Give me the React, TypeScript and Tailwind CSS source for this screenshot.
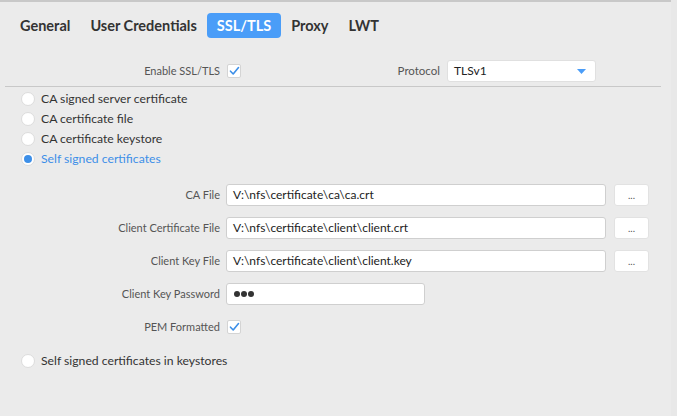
const tabs = ['General', 'User Credentials', 'SSL/TLS', 'Proxy', 'LWT'];

function Check() {
  return (
    <span className="w-[14px] h-[14px] bg-white rounded-[2px] border border-[#d4d4d4] flex items-center justify-center">
      <svg width="11" height="10" viewBox="0 0 11 10" fill="none">
        <path d="M1.5 5.2L4.2 8L9.5 1.5" stroke="#3d8fe8" strokeWidth="1.6" strokeLinecap="round" strokeLinejoin="round" />
      </svg>
    </span>
  );
}

function Radio({ label, checked }: { label: string; checked?: boolean }) {
  return (
    <div className="flex items-center h-[20px]">
      <span className="w-[14px] h-[14px] rounded-full bg-white border border-[#dcdcdc] flex items-center justify-center ml-[21px]">
        {checked && <span className="w-[8px] h-[8px] rounded-full bg-[#3d8fe8]" />}
      </span>
      <span className={`ml-[6px] text-[12.2px] ${checked ? 'text-[#3d8fe8]' : 'text-[#333]'}`}>{label}</span>
    </div>
  );
}

function FileRow({ label, value }: { label: string; value: string }) {
  return (
    <div className="flex items-center h-[22px]">
      <span className="w-[220px] text-right text-[11px] text-[#555]">{label}</span>
      <div className="ml-[6px] w-[380px] h-[22px] bg-white border border-[#cfcfcf] rounded-[3px] flex items-center px-[6px] text-[12px] text-[#222]">
        {value}
      </div>
      <button className="ml-[8px] w-[35px] h-[22px] bg-white rounded-[3px] border border-[#e2e2e2] text-[10px] text-[#555] leading-none">...</button>
    </div>
  );
}

export default function App() {
  return (
    <div className="w-[677px] h-[416px] bg-[#ebebeb] flex" style={{ fontFamily: 'Lato, "Open Sans", sans-serif' }}>
      <div className="w-[671px] border-t-2 border-[#c8c8c8]">
        <div className="flex items-center pl-[10px] pt-[11px]">
          {tabs.map((t) => (
            <span
              key={t}
              className={`h-[25px] px-[10px] flex items-center rounded-[4px] text-[14.5px] font-bold ${t === 'SSL/TLS' ? 'bg-[#4a9df8] text-white' : 'text-[#333]'}`}
            >
              {t}
            </span>
          ))}
        </div>

        <div className="flex items-center mt-[22px] h-[22px]">
          <span className="w-[220px] text-right text-[11px] text-[#555]">Enable SSL/TLS</span>
          <span className="ml-[7px]"><Check /></span>
          <span className="w-[199px] text-right text-[11.5px] text-[#555]">Protocol</span>
          <div className="ml-[7px] w-[149px] h-[22px] bg-white rounded-[3px] border border-[#e0e0e0] flex items-center justify-between px-[6px] text-[12px] text-[#222]">
            <span>TLSv1</span>
            <svg width="9" height="5" viewBox="0 0 9 5" className="mr-[3px]">
              <path d="M0 0H9L4.5 5Z" fill="#4a9df8" />
            </svg>
          </div>
        </div>

        <div className="ml-[5px] w-[656px] border-t border-[#c8c8c8] mt-[4px]" />

        <div className="pt-[2px]">
          <Radio label="CA signed server certificate" />
          <Radio label="CA certificate file" />
          <Radio label="CA certificate keystore" />
          <Radio label="Self signed certificates" checked />
        </div>

        <div className="mt-[15px] flex flex-col gap-[11px]">
          <FileRow label="CA File" value="V:\nfs\certificate\ca\ca.crt" />
          <FileRow label="Client Certificate File" value="V:\nfs\certificate\client\client.crt" />
          <FileRow label="Client Key File" value="V:\nfs\certificate\client\client.key" />
          <div className="flex items-center h-[22px]">
            <span className="w-[220px] text-right text-[11px] text-[#555]">Client Key Password</span>
            <div className="ml-[6px] w-[199px] h-[22px] bg-white border border-[#cfcfcf] rounded-[3px] flex items-center px-[7px] gap-[1px]">
              <span className="w-[6px] h-[6px] rounded-full bg-[#333]" />
              <span className="w-[6px] h-[6px] rounded-full bg-[#333]" />
              <span className="w-[6px] h-[6px] rounded-full bg-[#333]" />
            </div>
          </div>
          <div className="flex items-center h-[22px]">
            <span className="w-[220px] text-right text-[11px] text-[#555]">PEM Formatted</span>
            <span className="ml-[7px]"><Check /></span>
          </div>
        </div>

        <div className="mt-[13px]">
          <Radio label="Self signed certificates in keystores" />
        </div>
      </div>
      <div className="flex-1 bg-[#e8e8e8]" />
    </div>
  );
}
